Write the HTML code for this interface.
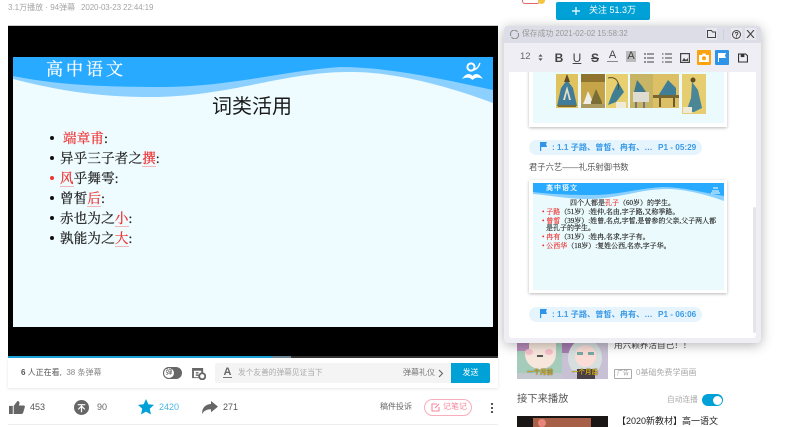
<!DOCTYPE html>
<html lang="zh"><head><meta charset="utf-8"><title>笔记</title>
<style>
html,body{margin:0;padding:0;background:#fff}
#p{position:relative;width:800px;height:427px;overflow:hidden;background:#fff;font-family:"Liberation Sans","Noto Sans CJK SC",sans-serif;color:#505050;filter:blur(.3px)}
#p div,#p svg{position:absolute}
.t{white-space:nowrap;line-height:1}
.s{font-family:"Liberation Serif","Noto Serif CJK SC",serif;color:#222;white-space:nowrap;line-height:1;-webkit-text-stroke:.25px currentColor}
.b{font-size:13.5px;letter-spacing:.2px}
.m{font-size:7px;-webkit-text-stroke:.15px currentColor}
.r{color:#e33}
.u{color:#e33;border-bottom:1px solid #f3b6b6}
.pill{background:#e6f4fe;border-radius:8px;height:15px;width:173px;left:529px}
.pt{font-size:8.200px;font-weight:bold;color:#3b9be6}
.ic{color:#444;font-size:12px;font-weight:bold;text-align:center;width:12px}
.bu{width:4px;height:4px;border-radius:50%;background:#111;left:50px}
</style></head><body><div id="p">

<div class="t" style="left:8px;top:4px;font-size:8px;color:#a5a5a5">3.1万播放 · 94弹幕</div>
<div class="t" style="left:81px;top:4px;font-size:8px;color:#a5a5a5;letter-spacing:-.1px">2020-03-23 22:44:19</div>

<div style="left:8px;top:25px;width:490px;height:1px;background:#ccc"></div>
<div style="left:8px;top:26px;width:490px;height:330px;background:#000"></div>
<div style="left:8px;top:356px;width:490px;height:2px;background:#333"></div>
<div style="left:8px;top:356px;width:264px;height:2px;background:#1ba3dc"></div>
<div style="left:272px;top:356px;width:19px;height:2px;background:#6d8794"></div>

<svg style="left:13px;top:57px" width="480" height="270" viewBox="0 0 480 270">
<rect width="480" height="270" fill="#effcff"/>
<path d="M0 0H480V46C430 27 375 14 335 15C270 15 215 40 137 40C80 40 40 32 0 22Z" fill="#8bd0ff"/>
<path d="M0 19C45 28 90 30 150 30C215 30 270 14 327 10C375 10 430 22 480 33L480 0H0Z" fill="#27aaff"/>
<circle cx="458" cy="10" r="3.600" fill="none" stroke="#fff" stroke-width="2"/>
<path d="M461 13C464 12 466 9 467 6" fill="none" stroke="#fff" stroke-width="1.300"/>
<path d="M449 22C453 16 457 16 459.500 19C462 16 466 16 470 22C466 20 462 20 459.500 23C457 20 453 20 449 22Z" fill="#fff"/>
</svg>
<div class="s" style="left:46px;top:61px;font-size:17px;color:#fff;letter-spacing:3px">高中语文</div>
<div class="t" style="left:212px;top:97px;font-size:20px;color:#1a1a1a">词类活用</div>
<div class="bu" style="top:136px"></div>
<div class="s b" style="left:63px;top:132px"><span class="r">端章甫</span>:</div>
<div class="bu" style="top:156px"></div>
<div class="s b" style="left:60px;top:152px">异乎三子者之<span class="u">撰</span>:</div>
<div class="bu" style="top:176px;background:#e33"></div>
<div class="s b" style="left:60px;top:172px"><span class="u">风</span>乎舞雩:</div>
<div class="bu" style="top:196px"></div>
<div class="s b" style="left:60px;top:192px">曾皙<span class="u">后</span>:</div>
<div class="bu" style="top:216px"></div>
<div class="s b" style="left:60px;top:212px">赤也为之<span class="u">小</span>:</div>
<div class="bu" style="top:236px"></div>
<div class="s b" style="left:60px;top:232px">孰能为之<span class="u">大</span>:</div>

<div style="left:8px;top:358px;width:490px;height:30px;background:#fff;box-shadow:0 1px 3px rgba(0,0,0,.1)"></div>
<div class="t" style="left:21px;top:369px;font-size:8px;color:#555"><b>6</b> 人正在看,&nbsp;&nbsp;<span style="color:#888">38 条弹幕</span></div>
<div style="left:163px;top:367px;width:19px;height:12px;border-radius:6px;background:#666"></div>
<div class="t" style="left:163px;top:367px;width:12px;height:12px;border-radius:50%;background:#fff;border:1px solid #666;box-sizing:border-box;font-size:7px;line-height:10px;text-align:center;color:#555">弹</div>
<svg style="left:192px;top:368px" width="14" height="12" viewBox="0 0 15 13"><path d="M0 0H12V5H10V3H2V10H7V11H0Z" fill="#666"/><rect x="4" y="4.500" width="3" height="1.500" fill="#666"/><rect x="4" y="7" width="3" height="1.500" fill="#666"/><circle cx="11" cy="9" r="3.300" fill="none" stroke="#666" stroke-width="2"/></svg>
<div style="left:215px;top:363px;width:236px;height:20px;background:#f4f4f4;border-radius:2px 0 0 2px"></div>
<div class="t" style="left:223px;top:368px;font-size:11px;font-weight:bold;color:#666;border-bottom:1.500px solid #777;line-height:9px;width:9px;text-align:center">A</div>
<div class="t" style="left:238px;top:369px;font-size:7.700px;color:#aaa">发个友善的弹幕见证当下</div>
<div class="t" style="left:403px;top:369px;font-size:8px;color:#777">弹幕礼仪</div>
<svg style="left:438px;top:369px" width="6" height="9" viewBox="0 0 6 9"><path d="M1 1L4.500 4.500L1 8" fill="none" stroke="#666" stroke-width="1.100"/></svg>
<div class="t" style="left:451px;top:363px;width:39px;height:20px;background:#00a1d6;color:#fff;font-size:8px;line-height:20px;text-align:center;border-radius:0 2px 2px 0">发送</div>

<svg style="left:9px;top:401px" width="16" height="13" viewBox="0 0 17 16" preserveAspectRatio="none"><path d="M0 6H4V16H0ZM5 6L9 0C11 0 11.500 2 11 3.500L10.500 5.500H15.500C17 5.500 17 7 16.700 8L15 14.500C14.700 15.500 14 16 13 16H5Z" fill="#666"/></svg>
<div class="t" style="left:30px;top:403px;font-size:9px;color:#555">453</div>
<svg style="left:74px;top:400px" width="15" height="15" viewBox="0 0 16 16"><circle cx="8" cy="8" r="8" fill="#666"/><path d="M4 5H12M8 5V13M8 6.500L4.500 10M8 6.500L11.500 10" stroke="#fff" stroke-width="1.300" fill="none"/></svg>
<div class="t" style="left:97px;top:403px;font-size:9px;color:#666">90</div>
<svg style="left:138px;top:399px" width="16" height="16" viewBox="0 0 17 17"><path d="M8.500 0L11 5.600L17 6.300L12.500 10.400L13.800 16.500L8.500 13.400L3.200 16.500L4.500 10.400L0 6.300L6 5.600Z" fill="#00a1d6"/></svg>
<div class="t" style="left:159px;top:403px;font-size:9px;color:#4bb4e6">2420</div>
<svg style="left:202px;top:401px" width="16" height="13" viewBox="0 0 16 15" preserveAspectRatio="none"><path d="M9 0L16 6.500L9 13V9.500C5 9.500 2 11 0 15C0 8 3 4 9 3.500Z" fill="#666"/></svg>
<div class="t" style="left:223px;top:403px;font-size:9px;color:#555">271</div>
<div class="t" style="left:380px;top:403px;font-size:8px;color:#666">稿件投诉</div>
<div style="left:424px;top:399px;width:46px;height:15px;border:1px solid #f8aebf;border-radius:9px"></div>
<svg style="left:431px;top:403px" width="9" height="9" viewBox="0 0 9 9"><path d="M6 1H1V8H8V4M4 5L8 1" fill="none" stroke="#f4899f" stroke-width="1.100"/></svg>
<div class="t" style="left:443px;top:403px;font-size:8px;color:#f4899f">记笔记</div>
<div style="left:491px;top:403px;width:2px;height:2px;background:#555"></div>
<div style="left:491px;top:407px;width:2px;height:2px;background:#555"></div>
<div style="left:491px;top:411px;width:2px;height:2px;background:#555"></div>
<div style="left:8px;top:424px;width:490px;height:1px;background:#eee"></div>

<div style="left:522px;top:0;width:16px;height:3px;background:#fff;border:1px solid #e06a6a;border-top:0;border-radius:0 0 3px 3px"></div>
<div style="left:538px;top:0;width:7px;height:4px;background:#f5c542;border-radius:0 0 4px 4px"></div>
<div style="left:556px;top:2px;width:94px;height:18px;background:#00a1d6;border-radius:2px"></div>
<svg style="left:572px;top:7px" width="8" height="8" viewBox="0 0 9 9"><path d="M4.500 0V9M0 4.500H9" stroke="#fff" stroke-width="1.300"/></svg>
<div class="t" style="left:589px;top:6px;font-size:9px;color:#fff">关注 51.3万</div>

<div style="left:517px;top:343px;width:45px;height:36px;overflow:hidden;background:#c3c8cf">
 <div style="left:0;top:0;width:45px;height:30px;background:#a5ccba"></div>
 <div style="left:8px;top:-4px;width:31px;height:30px;background:#f7e6dc;border-radius:0 0 15px 15px"></div>
 <div style="left:0;top:0;width:12px;height:8px;background:#b68ab8"></div>
 <div style="left:8px;top:6px;width:8px;height:6px;background:#f5bfca;border-radius:50%"></div>
 <div style="left:28px;top:6px;width:8px;height:6px;background:#f5bfca;border-radius:50%"></div>
 <div style="left:20px;top:12px;width:6px;height:2px;background:#555"></div>
 <div class="t" style="left:10px;top:27px;font-size:6.500px;font-weight:bold;color:#d8ae1e;text-shadow:0 0 1px #222">一个月前</div>
</div>
<div style="left:562px;top:343px;width:46px;height:36px;overflow:hidden;background:#c8c0d4">
 <div style="left:0;top:0;width:16px;height:10px;background:#a67cb0"></div>
 <div style="left:6px;top:-4px;width:34px;height:38px;background:#d6dfde;border-radius:50%"></div>
 <div style="left:13px;top:2px;width:21px;height:22px;background:#fbdcd6;border-radius:50%"></div>
 <div style="left:15px;top:9px;width:6px;height:3px;background:#76a9a5"></div>
 <div style="left:26px;top:9px;width:6px;height:3px;background:#76a9a5"></div>
 <div style="left:15px;top:26px;width:18px;height:10px;background:#4a4048"></div>
 <div class="t" style="left:10px;top:27px;font-size:6.500px;font-weight:bold;color:#d8ae1e;text-shadow:0 0 1px #222">一个月后</div>
</div>
<div class="t" style="left:614px;top:341px;font-size:8.600px;color:#444">用六颗养活自己！！</div>
<div class="t" style="left:614px;top:369px;width:16px;height:8px;border:1px solid #aaa;font-size:6px;line-height:8px;text-align:center;color:#999;border-radius:1px">广告</div>
<div class="t" style="left:636px;top:369px;font-size:8px;color:#aaa">0基础免费学画画</div>
<div class="t" style="left:517px;top:395px;font-size:10.300px;color:#555">接下来播放</div>
<div class="t" style="left:667px;top:396px;font-size:7.700px;color:#aaa">自动连播</div>
<div style="left:702px;top:394px;width:21px;height:12px;background:#00a1d6;border-radius:6px"></div>
<div style="left:713px;top:395.500px;width:9px;height:9px;background:#fff;border-radius:50%"></div>
<div style="left:517px;top:416px;width:91px;height:11px;background:#1a1616"></div>
<div style="left:533px;top:418px;width:58px;height:9px;background:#a85f48"></div>
<div style="left:538px;top:419px;width:8px;height:8px;background:#e8847a;border-radius:50%"></div>
<div class="t" style="left:617px;top:416.500px;font-size:9px;color:#222">【2020新教材】高一语文</div>

<div style="left:504px;top:26px;width:257px;height:317px;background:#eeeef4;border-radius:4px;box-shadow:0 2px 12px rgba(0,0,0,.3)"></div>
<div style="left:504px;top:26px;width:257px;height:17px;background:#dcdde6;border-radius:4px 4px 0 0"></div>
<svg style="left:510px;top:30px" width="9" height="9" viewBox="0 0 9 9"><path d="M1 6A3.600 3.600 0 0 1 7.500 2M8 3A3.600 3.600 0 0 1 1.500 7" fill="none" stroke="#888" stroke-width="1"/></svg>
<div class="t" style="left:522px;top:30px;font-size:7.800px;color:#999">保存成功 2021-02-02 15:58:32</div>
<div style="left:706px;top:28px;width:11px;height:12px;background:#e8e8ee"></div>
<svg style="left:707px;top:30px" width="9" height="8" viewBox="0 0 9 8"><path d="M.5 .5H4.500L5.500 2H8.500V7.500H.5Z" fill="none" stroke="#444"/></svg>
<div style="left:723px;top:29px;width:1px;height:11px;background:#d0d0d8"></div>
<div style="left:731px;top:28px;width:11px;height:12px;background:#e8e8ee"></div>
<svg style="left:731px;top:29px" width="11" height="11" viewBox="0 0 11 11"><circle cx="5.500" cy="5.500" r="4" fill="none" stroke="#444"/><path d="M4.200 4.500C4.200 3 6.800 3 6.800 4.500C6.800 5.500 5.500 5.500 5.500 6.500V7M5.500 7.500V8.500" fill="none" stroke="#444" stroke-width=".9"/></svg>
<div style="left:745px;top:28px;width:11px;height:12px;background:#e8e8ee"></div>
<svg style="left:746px;top:30px" width="9" height="8" viewBox="0 0 9 8"><path d="M1 0L8 8M8 0L1 8" stroke="#444" stroke-width="1.100"/></svg>

<div class="t" style="left:520px;top:52px;font-size:9.500px;color:#666">12</div>
<svg style="left:538px;top:54px" width="5" height="7" viewBox="0 0 6 8"><path d="M3 0L5.500 3H.5ZM3 8L.5 5H5.500Z" fill="#555"/></svg>
<div class="t ic" style="left:553px;top:52px">B</div>
<div class="t ic" style="left:571px;top:52px;font-weight:normal;text-decoration:underline">U</div>
<div class="t ic" style="left:589px;top:52px;text-decoration:line-through">S</div>
<div class="t ic" style="left:607px;top:50px;font-size:11px;border-bottom:1.500px solid #888;line-height:11px;width:11px;font-weight:normal">A</div>
<div class="t ic" style="left:626px;top:51px;font-size:11px;background:#bbb;width:10px;height:11px;line-height:11px;font-weight:normal">A</div>
<svg style="left:644px;top:53px" width="10" height="10" viewBox="0 0 10 10"><path d="M3 1H10M3 5H10M3 9H10M1 0V2M1 4V6M1 8V10" stroke="#444" stroke-width="1.100" fill="none"/></svg>
<svg style="left:662px;top:53px" width="10" height="10" viewBox="0 0 10 10"><path d="M3 1H10M3 5H10M3 9H10M0 1H1.500M0 5H1.500M0 9H1.500" stroke="#444" stroke-width="1.100" fill="none"/></svg>
<svg style="left:680px;top:53px" width="10" height="10" viewBox="0 0 10 10"><rect x=".6" y=".6" width="8.800" height="8.800" fill="none" stroke="#444" stroke-width="1.200"/><path d="M2 8L4 5L6 7L8 5V8Z" fill="#444"/></svg>
<div style="left:697px;top:50px;width:14px;height:15px;background:#fba311;border-radius:1px"></div>
<svg style="left:699px;top:53px" width="10" height="9" viewBox="0 0 10 9"><path d="M0 2H3L3.500 .5H6.500L7 2H10V9H0Z" fill="#fff"/><circle cx="5" cy="5.200" r="2" fill="#fba311"/></svg>
<div style="left:715px;top:50px;width:14px;height:15px;background:#2e94e8;border-radius:1px"></div>
<svg style="left:717px;top:53px" width="10" height="9" viewBox="0 0 10 9"><path d="M1 0H9L8 2.500L9 5H2V9H1Z" fill="#fff"/></svg>
<svg style="left:738px;top:53px" width="10" height="10" viewBox="0 0 11 10"><path d="M.6 .6H8.500L10.400 2.500V9.400H.6Z" fill="none" stroke="#333" stroke-width="1.200"/><rect x="3" y="1" width="4" height="3" fill="#333"/></svg>

<div style="left:509px;top:72px;width:247px;height:266px;background:#fff;overflow:hidden;border-radius:0 0 3px 3px">
 <div style="left:20px;top:-20px;width:198px;height:75px;background:#fff;box-shadow:0 1px 3px rgba(0,0,0,.28)"></div>
 <div style="left:24px;top:-20px;width:191px;height:71px;background:#ebfbfd"></div>
 <svg style="left:47px;top:2px;filter:blur(.3px)" width="150" height="40" viewBox="0 0 150 40">
  <rect x="0" y="0" width="22" height="34" fill="#e0c25e"/><path d="M11 6L17 14L21 32H1L5 14Z" fill="#3f7d9b"/><path d="M11 12L7 26H9L11 18L13 26H15Z" fill="#e4ddc8"/><path d="M11 0L14 8H8Z" fill="#5a4c28"/><rect x="2" y="31" width="18" height="2" fill="#7a6a35"/>
  <rect x="25" y="0" width="24" height="34" fill="#c5a548"/><rect x="25" y="0" width="24" height="8" fill="#8f7430"/><path d="M28 28L32 17L37 28V32H26Z" fill="#efeee6"/><path d="M40 15L46 28V32H35V28Z" fill="#7a6d36"/><rect x="25" y="30" width="24" height="4" fill="#ab9a60"/>
  <rect x="50" y="0" width="22" height="34" fill="#e8cf6f"/><path d="M62 8L68 18L60 28L52 31L56 20Z" fill="#3f7f92"/><path d="M52 4C60 2 64 8 62 16" stroke="#5a4a28" stroke-width="1" fill="none"/><rect x="60" y="28" width="10" height="6" fill="#f0ebd8"/>
  <rect x="74" y="0" width="23" height="34" fill="#c8b465"/><path d="M81 6L86 12L90 18H78Z" fill="#3e7a8c"/><rect x="77" y="18" width="16" height="10" fill="#dedbd0"/><path d="M80 28V34M88 28V34" stroke="#777" stroke-width="2"/>
  <rect x="97" y="0" width="26" height="34" fill="#ddc066"/><path d="M112 6L120 14V24H102V22L107 14Z" fill="#3f7e97"/><rect x="97" y="21" width="26" height="3" fill="#77662f"/><path d="M104 24V33M118 24V33" stroke="#6a5a2c" stroke-width="2"/>
  <rect x="126" y="0" width="24" height="40" fill="#e6cd70"/><path d="M136 8L142 16L146 34L138 38H130L135 24Z" fill="#4a8695"/><circle cx="137" cy="6" r="2.500" fill="#5a4e2a"/><rect x="127" y="33" width="9" height="6" fill="#efe9d8"/>
 </svg>
</div>
<div class="pill" style="top:140px"></div>
<svg style="left:540px;top:142px" width="8" height="9" viewBox="0 0 8 9"><path d="M0 0H7L6 2L7 5H1.200V9H0Z" fill="#2e94e8"/></svg>
<div class="t pt" style="left:552px;top:144px">: 1.1 子路、曾皙、冉有、…</div>
<div class="t pt" style="left:658px;top:144px">P1 - 05:29</div>
<div class="t" style="left:529px;top:163px;font-size:8.300px;color:#555">君子六艺——礼乐射御书数</div>
<div style="left:529px;top:180px;width:198px;height:113px;background:#fff;box-shadow:0 1px 3px rgba(0,0,0,.28)"></div>
<svg style="left:533px;top:183px" width="191" height="107" viewBox="0 0 191 107">
 <rect width="191" height="107" fill="#ebfbfd"/>
 <path d="M0 0H191V18C172 11 150 6 134 6C107 6 85 16 55 16C32 16 16 12 0 11Z" fill="#8bd0ff"/>
 <path d="M0 9C18 11 35 12 60 12C85 12 107 5 130 4C150 4 172 10 191 13V0H0Z" fill="#27aaff"/>
 <path d="M179 8H186M178 10H187M180 5H185" stroke="#fff"/>
</svg>
<div class="s" style="left:546px;top:185px;font-size:7px;color:#fff;letter-spacing:1px">高中语文</div>
<div class="s m" style="left:570px;top:199.500px">四个人都是<span class="r">孔子</span>（60岁）的学生。</div>
<div class="s m" style="left:542px;top:208.500px"><span class="r">•</span> <span class="r">子路</span>（51岁）:姓仲,名由,字子路,又称季路。</div>
<div class="s m" style="left:542px;top:217.500px"><span class="r">•</span> <span class="r">曾皙</span>（39岁）:姓曾,名点,字皙,是曾参的父亲,父子两人都</div>
<div class="s m" style="left:546px;top:224.500px">是孔子的学生。</div>
<div class="s m" style="left:542px;top:233.500px"><span class="r">•</span> <span class="r">冉有</span>（31岁）:姓冉,名求,字子有。</div>
<div class="s m" style="left:542px;top:242.500px"><span class="r">•</span> <span class="r">公西华</span>（18岁）:复姓公西,名赤,字子华。</div>
<div class="pill" style="top:307px"></div>
<svg style="left:540px;top:309px" width="8" height="9" viewBox="0 0 8 9"><path d="M0 0H7L6 2L7 5H1.200V9H0Z" fill="#2e94e8"/></svg>
<div class="t pt" style="left:552px;top:311px">: 1.1 子路、曾皙、冉有、…</div>
<div class="t pt" style="left:658px;top:311px">P1 - 06:06</div>
<div style="left:753px;top:207px;width:3px;height:126px;background:#e4e4ea;border-radius:2px"></div>

</div></body></html>
